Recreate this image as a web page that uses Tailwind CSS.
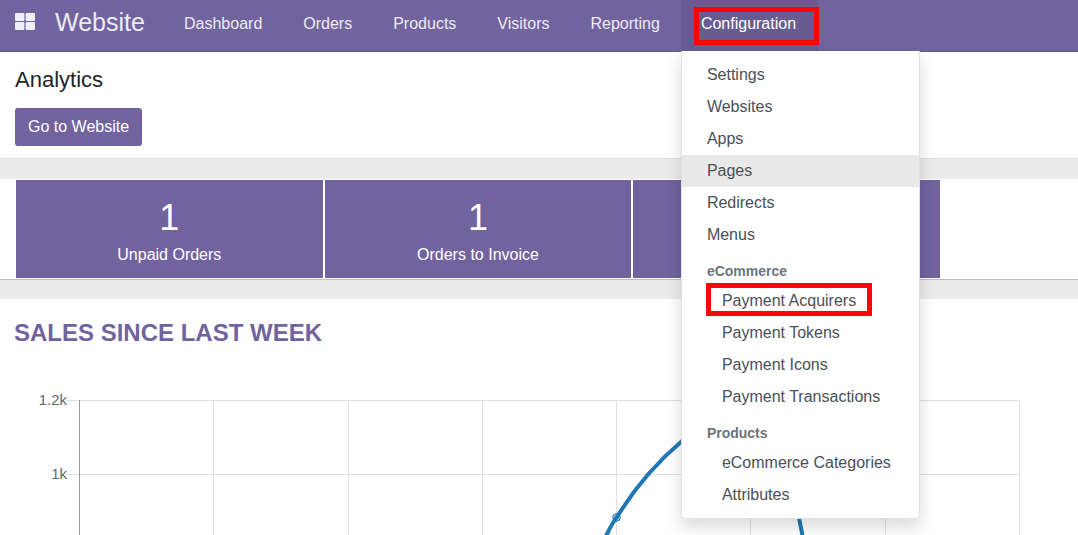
<!DOCTYPE html>
<html lang="en">
<head>
<meta charset="utf-8">
<meta name="viewport" content="width=device-width, initial-scale=1">
<title>Website</title>
<script src="https://cdn.jsdelivr.net/npm/@tailwindcss/browser@4"></script>
</head>
<body class="flex h-screen flex-col overflow-hidden bg-[#ebebeb] font-['Liberation_Sans',Arial,sans-serif] text-base text-[#212529]">
<header class="relative z-10 flex h-[52px] shrink-0 border-b border-[#5f5b80] bg-[#71639e] text-[#ecebf1]">
  <a href="#" aria-label="Apps" class="flex h-full w-10 items-start pt-[13px] pl-[15px]">
    <svg class="h-[17px] w-5" viewBox="0 0 20 17" fill="#f0eff5"><rect width="9.4" height="8" rx="1"/><rect x="10.6" width="9.4" height="8" rx="1"/><rect y="9" width="9.4" height="8" rx="1"/><rect x="10.6" y="9" width="9.4" height="8" rx="1"/></svg>
  </a>
  <a href="#" class="w-[124px] pl-[15px] text-[25px] leading-[45px]">Website</a>
  <nav>
    <ul class="flex h-full gap-px leading-[47px]">
      <li><a href="#" class="block px-5">Dashboard</a></li>
      <li><a href="#" class="block px-5">Orders</a></li>
      <li><a href="#" class="block px-5">Products</a></li>
      <li><a href="#" class="block px-5">Visitors</a></li>
      <li><a href="#" class="block px-5">Reporting</a></li>
      <li class="relative">
        <button type="button" aria-expanded="true" class="block h-full w-[137px] bg-[#685b91] pb-1 pl-5 text-left leading-[47px] text-white">Configuration</button>
        <span class="pointer-events-none absolute top-[7px] -right-px left-[13px] h-[38px] border-5 border-[#fb0509]"></span>
        <div class="absolute top-full left-0 w-[239px] rounded-b border border-t-0 border-[#dee2e6] bg-white pt-2 pb-[7px] leading-8 whitespace-nowrap text-[#495057] shadow-[0_8px_16px_rgba(0,0,0,0.15)]">
          <a href="#" class="block pl-[25px]">Settings</a>
          <a href="#" class="block pl-[25px]">Websites</a>
          <a href="#" class="block pl-[25px]">Apps</a>
          <a href="#" class="block bg-[#e9e9e9] pl-[25px]">Pages</a>
          <a href="#" class="block pl-[25px]">Redirects</a>
          <a href="#" class="block pl-[25px]">Menus</a>
          <h2 class="mt-[6px] pl-[25px] text-sm leading-7 font-bold text-[#6c757d]">eCommerce</h2>
          <a href="#" class="relative block pl-10">Payment Acquirers<span class="pointer-events-none absolute -top-0.5 left-6 h-[33px] w-[166px] border-5 border-[#fb0509]"></span></a>
          <a href="#" class="block pl-10">Payment Tokens</a>
          <a href="#" class="block pl-10">Payment Icons</a>
          <a href="#" class="block pl-10">Payment Transactions</a>
          <h2 class="mt-[6px] pl-[25px] text-sm leading-7 font-bold text-[#6c757d]">Products</h2>
          <a href="#" class="block pl-10">eCommerce Categories</a>
          <a href="#" class="block pl-10">Attributes</a>
        </div>
      </li>
    </ul>
  </nav>
</header>
<section class="shrink-0 border-b border-[#dee2e6] bg-white px-[15px] pt-3 pb-3">
  <h1 class="text-[22px] leading-8">Analytics</h1>
  <button type="button" class="mt-3 block h-[38px] rounded-[3px] bg-[#71639e] px-[13px] text-white">Go to Website</button>
</section>
<main class="flex min-h-0 grow flex-col">
  <section class="mt-5 shrink-0 border-b border-[#bdbdbd] bg-white pt-px pb-px pl-4">
    <div class="grid w-[87%] grid-cols-3 gap-x-0.5 text-center text-white">
      <a href="#" class="block h-[98px] bg-[#71639e] pt-[18px]"><span class="block text-4xl leading-10">1</span><span class="block leading-[34px]">Unpaid Orders</span></a>
      <a href="#" class="block h-[98px] bg-[#71639e] pt-[18px]"><span class="block text-4xl leading-10">1</span><span class="block leading-[34px]">Orders to Invoice</span></a>
      <a href="#" aria-label="More orders" class="block h-[98px] bg-[#71639e]"></a>
    </div>
  </section>
  <section class="mt-[19px] min-h-0 grow overflow-hidden bg-white">
    <h2 class="pt-[18px] pl-[14px] text-2xl leading-8 font-bold text-[#71639e]">SALES SINCE LAST WEEK</h2>
    <svg class="mt-[31px] block w-full" viewBox="0 380 1078 156" role="img" aria-label="Sales since last week">
      <g fill="none" stroke="#e0e0e0">
        <path d="M67 400.5H1020M67 474.5H1020"/>
        <path d="M213.5 400V536M348.5 400V536M482.5 400V536M616.5 400V536M750.5 400V536M885.5 400V536M1019.5 400V536"/>
        <path d="M79.5 400V536" stroke="#999"/>
      </g>
      <g fill="#666" font-size="15" text-anchor="end"><text x="67" y="405">1.2k</text><text x="67" y="479">1k</text></g>
      <circle cx="616.5" cy="517.5" r="3.8" fill="#a5c9e1" stroke="#1f77b4"/>
      <path d="M605 538C609 530 612 523 617 517C634 489 656 463 682 441C740 390 780 405 799 518L803 538" fill="none" stroke="#1f77b4" stroke-width="4"/>
    </svg>
  </section>
</main>
</body>
</html>
